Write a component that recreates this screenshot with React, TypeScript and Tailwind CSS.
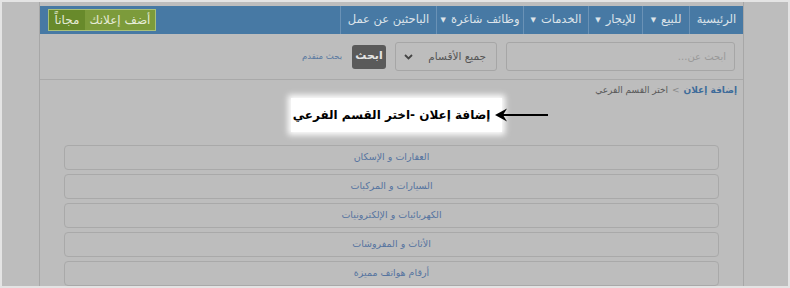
import React from 'react';

const navItems = [
  { label: 'الرئيسية', caret: false, w: 'w-[54px]' },
  { label: 'للبيع', caret: true, w: 'w-[47px]' },
  { label: 'للإيجار', caret: true, w: 'w-[54px]' },
  { label: 'الخدمات', caret: true, w: 'w-[65px]' },
  { label: 'وظائف شاغرة', caret: true, w: 'w-[87px]' },
  { label: 'الباحثين عن عمل', caret: false, w: 'w-[96px]' },
];

const categories = [
  'العقارات و الإسكان',
  'السيارات و المركبات',
  'الكهربائيات و الإلكترونيات',
  'الأثاث و المفروشات',
  'أرقام هواتف مميزة',
];

export default function App() {
  return (
    <div
      className="w-[790px] h-[288px] overflow-hidden border-2 border-[#e4e4e4] bg-[#bdbdbd] flex"
      style={{ fontFamily: '"DejaVu Sans", Tahoma, sans-serif' }}
    >
      {/* dimmed page container */}
      <div dir="rtl" className="ml-[37px] w-[705px] flex-shrink-0 border-x border-[#a7a7a7] pt-[4px] flex flex-col">
        {/* top navbar */}
        <div className="h-[28px] bg-[#4779a4] flex items-stretch">
          {navItems.map((item) => (
            <div
              key={item.label}
              className={`${item.w} flex-shrink-0 flex items-center justify-center gap-[5px] border-l border-[#6a92b6] text-[11.5px] text-[#dde4ea] whitespace-nowrap`}
            >
              <span>{item.label}</span>
              {item.caret && <span className="text-[7px] text-[#dde4ea]">▼</span>}
            </div>
          ))}
          <div className="flex-1 flex items-center justify-end pl-[8px]">
            <div className="h-[22px] flex border border-[#a9c07a] text-[12px] text-[#e6ecd8]">
              <span className="bg-[#7c9b3b] w-[70px] justify-center flex items-center">أضف إعلانك</span>
              <span className="bg-[#688a2b] w-[36px] justify-center flex items-center">مجاناً</span>
            </div>
          </div>
        </div>

        {/* search bar */}
        <div className="h-[46px] border-b border-[#a9a9a9] flex items-center pr-[8px] gap-[9px]">
          <div className="w-[229px] h-[29px] rounded-[3px] border border-[#a6a6a6] flex items-center px-[8px] text-[10px] text-[#999]">
            ابحث عن...
          </div>
          <div className="w-[102px] h-[29px] rounded-[3px] border border-[#a6a6a6] flex items-center justify-between pr-[10px] pl-[8px] text-[10.5px] text-[#555]">
            <span>جميع الأقسام</span>
            <svg width="9" height="6" viewBox="0 0 9 6">
              <path d="M1 1 L4.5 4.5 L8 1" fill="none" stroke="#444" strokeWidth="1.8" />
            </svg>
          </div>
          <div className="w-[34px] h-[24px] rounded-[3px] bg-[#5a5a5a] flex items-center justify-center text-[11px] font-bold text-[#e4e4e4] ml-[1px]">
            ابحث
          </div>
          <span className="text-[8.5px] text-[#5878a0]">بحث متقدم</span>
        </div>

        {/* breadcrumb */}
        <div className="h-[18px] pt-[4px] pr-[6px] flex items-center gap-[4px] text-[9px]">
          <span className="font-bold text-[#3d6c9a]">إضافة إعلان</span>
          <span className="text-[#888]">&gt;</span>
          <span className="text-[#5a5a5a]">اختر القسم الفرعي</span>
        </div>

        {/* highlighted title */}
        <div className="relative h-[34px] flex justify-center">
          <div className="h-[34px] bg-white shadow-[0_0_6px_3px_#ffffff] flex items-center pl-[2px] pr-[12px] mr-[-10px]">
            <h1 className="text-[12px] font-bold text-black whitespace-nowrap">إضافة إعلان -اختر القسم الفرعي</h1>
          </div>
          <svg className="absolute left-[455px] top-[10px]" width="54" height="14" viewBox="0 0 54 14">
            <path d="M2 7 H53" stroke="#000" strokeWidth="2.2" />
            <path d="M0 7 L12 0.5 L8 7 L12 13.5 Z" fill="#000" />
          </svg>
        </div>

        {/* category list */}
        <div className="mt-[13px] px-[24px] flex flex-col gap-[4px]">
          {categories.map((c) => (
            <div
              key={c}
              className="h-[25px] flex-shrink-0 rounded-[4px] border border-[#a9a9a9] flex items-center justify-center text-[9.5px] text-[#5674a0]"
            >
              {c}
            </div>
          ))}
        </div>
      </div>
    </div>
  );
}
